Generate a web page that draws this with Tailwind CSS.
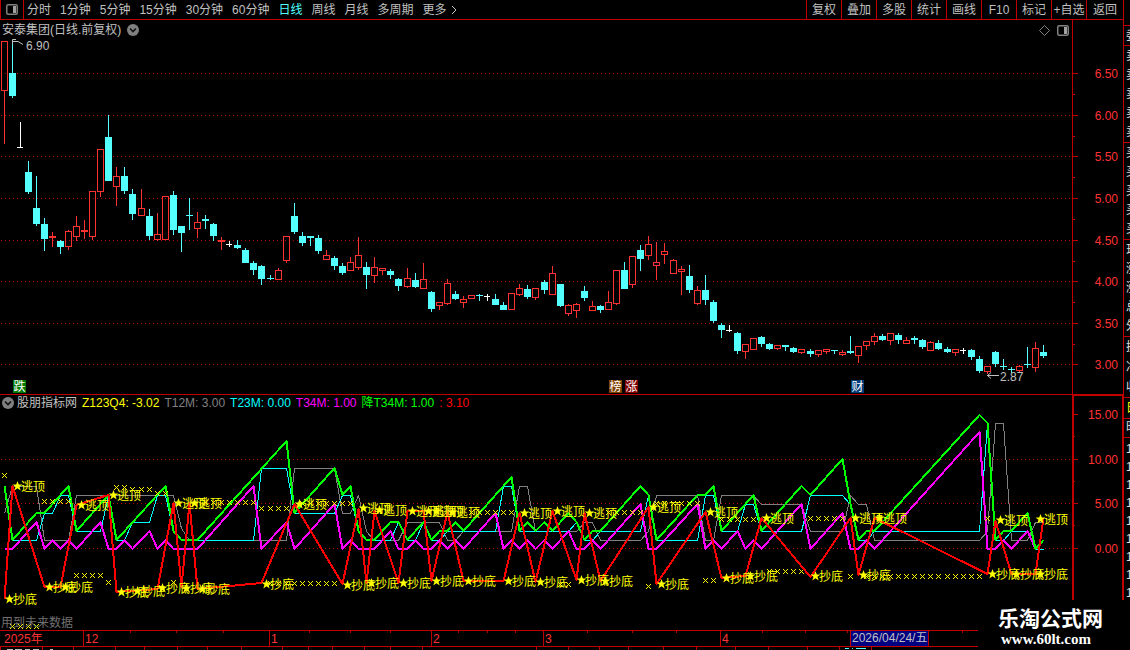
<!DOCTYPE html>
<html lang="zh-CN">
<head>
    <meta charset="UTF-8">
    <meta name="viewport" content="width=device-width, initial-scale=1.0">
    <title>安泰集团 日线</title>
    <script src="https://cdn.jsdelivr.net/npm/@tailwindcss/browser@4"></script>
</head>
<body class="relative flex min-h-screen overflow-hidden bg-black font-['Liberation_Sans','Noto_Sans_CJK_SC',sans-serif] text-[12px] leading-4 text-[#c0c0c0]">

    <main class="flex min-w-0 flex-1 flex-col">

        <!-- Toolbar -->
        <header class="flex h-5 items-stretch justify-between border-b border-[#c00000] whitespace-nowrap">
            <nav class="flex items-center gap-[9px]">
                <button aria-label="侧栏" class="-mr-[6px] flex h-full w-6 items-center justify-center border-x border-[#c00000]">
                    <svg class="h-[11px] w-3" viewBox="0 0 12 11"><rect x=".75" y=".75" width="10.5" height="9.5" rx="1.5" fill="none" stroke="#808080" stroke-width="1.5"/><rect x="7" y="2" width="3" height="7" fill="#a0a0a0"/></svg>
                </button>
                <button>分时</button>
                <button>1分钟</button>
                <button>5分钟</button>
                <button>15分钟</button>
                <button>30分钟</button>
                <button>60分钟</button>
                <button class="text-[#54ffff]">日线</button>
                <button>周线</button>
                <button>月线</button>
                <button>多周期</button>
                <button class="flex items-center gap-1">更多
                    <svg class="h-2 w-[6px]" viewBox="0 0 6 8"><path d="M1 0l4 4-4 4" fill="none" stroke="#c0c0c0"/></svg>
                </button>
            </nav>
            <div class="flex">
                <button class="w-[35px] border-l border-[#c00000]">复权</button>
                <button class="w-[35px] border-l border-[#c00000]">叠加</button>
                <button class="w-[35px] border-l border-[#c00000]">多股</button>
                <button class="w-[35px] border-l border-[#c00000]">统计</button>
                <button class="w-[35px] border-l border-[#c00000]">画线</button>
                <button class="w-[35px] border-l border-[#c00000]">F10</button>
                <button class="w-[35px] border-l border-[#c00000]">标记</button>
                <button class="w-[35px] border-l border-[#c00000]">+自选</button>
                <button class="w-[37px] border-l border-[#c00000]">返回</button>
            </div>
        </header>

        <!-- Price chart -->
        <section>
            <div class="flex h-5">
                <div class="flex flex-1 items-center justify-between pr-[3px] pl-[2px]">
                    <h1 class="flex items-center gap-[6px]">安泰集团(日线.前复权)
                        <svg class="size-3" viewBox="0 0 12 12"><circle cx="6" cy="6" r="6" fill="#808080"/><path d="M3 4.5l3 3 3-3" fill="none" stroke="#101010" stroke-width="1.6"/></svg>
                    </h1>
                    <div class="flex items-center gap-[7px]">
                        <svg class="size-[11px]" viewBox="0 0 11 11"><path d="M5.5 .5l5 5-5 5-5-5z" fill="none" stroke="#808080"/></svg>
                        <svg class="h-[11px] w-3" viewBox="0 0 12 11"><rect x=".75" y=".75" width="10.5" height="9.5" rx="1.5" fill="none" stroke="#808080" stroke-width="1.5"/><rect x="7" y="2" width="3" height="7" fill="#a0a0a0"/></svg>
                    </div>
                </div>
                <div class="w-[51px] border-l border-[#c00000]"></div>
            </div>
            <svg id="price" class="block h-auto w-full overflow-visible" viewBox="0 40 1123 354"></svg>
        </section>

        <!-- Indicator chart -->
        <section>
            <div class="flex h-[17px]">
                <div class="flex flex-1 items-center gap-[5px] border-t border-[#c00000] pl-[2px]">
                    <svg class="-mr-[2px] size-3" viewBox="0 0 12 12"><circle cx="6" cy="6" r="6" fill="#808080"/><path d="M3 4.5l3 3 3-3" fill="none" stroke="#101010" stroke-width="1.6"/></svg>
                    <span>股朋指标网</span>
                    <span class="text-[#ffff00]">Z123Q4: -3.02</span>
                    <span class="text-[#808080]">T12M: 3.00</span>
                    <span class="text-[#00ffff]">T23M: 0.00</span>
                    <span class="text-[#ff00ff]">T34M: 1.00</span>
                    <span class="text-[#00ff00]">降T34M: 1.00</span>
                    <span class="text-[#ff0000]">: 3.10</span>
                </div>
                <div class="w-[51px] border-t-2 border-r border-l-2 border-[#c00000]"></div>
            </div>
            <svg id="indicator" class="block h-auto w-full overflow-visible" viewBox="0 411 1123 239"></svg>
        </section>
    </main>

    <!-- Quote panel, only its left edge is in view -->
    <aside class="flex w-[7px] flex-col overflow-hidden border-l border-[#c00000] pt-[25px] text-[#e0e0e0]">
        <div class="h-5 shrink-0 border-t border-[#c00000] pl-[2px] leading-5">委</div>
        <div class="flex h-[97px] shrink-0 flex-col justify-around border-t border-[#c00000] pl-[2px]"><span>卖</span><span>卖</span><span>卖</span><span>卖</span><span>卖</span></div>
        <div class="flex h-[97px] shrink-0 flex-col justify-around border-t border-[#c00000] pl-[2px]"><span>买</span><span>买</span><span>买</span><span>买</span><span>买</span></div>
        <div class="flex h-[97px] shrink-0 flex-col justify-around border-t border-[#c00000] pl-[2px]"><span>现</span><span>涨</span><span>涨</span><span>总</span><span>外</span></div>
        <div class="flex h-[61px] shrink-0 flex-col justify-around border-t border-[#c00000] pl-[2px]"><span>换</span><span>净</span><span>收</span></div>
        <div class="h-[21px] shrink-0 border-t border-[#c00000] pl-[2px] leading-5 text-[#ffff00]">日</div>
        <div class="h-[19px] shrink-0 border-t border-[#c00000] pl-[2px]">时</div>
        <div class="flex flex-col border-t border-[#c00000] pt-[2px] pl-[2px] leading-[18px]"><span>1</span><span>1</span><span>1</span><span>1</span><span>1</span><span>1</span><span>1</span><span>1</span><span>1</span></div>
    </aside>

    <!-- Watermark -->
    <div class="absolute right-0 bottom-0 h-[50px] w-[152px] bg-black pt-2 pl-5 font-bold text-white">
        <p class="text-[21px] leading-[22px]">乐淘公式网</p>
        <p class="pl-[3px] font-['Liberation_Serif',serif] text-[15px] leading-[18px]">www.60lt.com</p>
    </div>

    <script>
        const NS = 'http://www.w3.org/2000/svg';
        const RED = '#ff3232', CYAN = '#54ffff', FRAME = '#c00000';

        function add(parent, tag, attrs, text) {
            const el = document.createElementNS(NS, tag);
            for (const key in attrs) el.setAttribute(key, attrs[key]);
            if (text !== undefined) el.textContent = text;
            parent.appendChild(el);
            return el;
        }
        const box = (g, x, y, width, height, fill) => add(g, 'rect', { x, y, width, height, fill, 'shape-rendering': 'crispEdges' });
        const label = (g, x, y, text, fill, anchor = 'start') => add(g, 'text', { x, y, fill, 'text-anchor': anchor }, text);
        const barX = i => Math.floor(4.03 + 8.06 * i);

        function dotted(g, y) {
            add(g, 'line', { x1: 1, x2: 1072, y1: y + 0.5, y2: y + 0.5, stroke: '#b00000', 'stroke-dasharray': '1 3', 'shape-rendering': 'crispEdges' });
        }

        // colour, high, body top, body bottom, low
        const candles = `r 41 41 91 144|c 41 73 96 98|w 122 147 148 148|c 161 172 192 194|c 176 208 224 226|c 218 224 239 251|r 232 236 238 247|c 240 241 247 254
r 230 231 247 250|r 216 226 237 241|r 220 230 232 239|r 191 191 237 240|r 149 149 192 197|c 115 137 181 181|r 167 176 187 206|c 167 176 191 194
c 189 194 214 220|r 189 208 216 216|c 209 216 236 240|r 213 234 240 241|r 196 196 240 240|c 191 195 230 235|c 226 226 233 252|c 198 215 216 230
r 212 222 229 238|c 215 219 221 229|c 223 224 236 241|r 237 240 242 250|w 241 244 245 247|c 240 245 248 249|c 248 250 263 263|c 261 263 270 275
c 265 266 279 285|c 275 278 279 280|r 268 270 280 280|r 236 236 261 263|c 203 216 232 234|c 232 236 243 246|c 236 236 238 246|c 235 238 251 254
r 250 255 260 260|c 256 258 266 270|c 263 266 273 275|r 257 262 271 271|r 237 255 268 270|c 262 267 275 289|r 257 267 276 283|r 268 268 271 275
c 269 271 275 279|c 278 279 286 291|r 268 278 287 288|c 273 280 287 288|r 263 279 289 289|c 291 292 309 312|r 302 302 306 310|r 279 283 304 305
c 291 294 299 300|r 296 299 303 308|r 295 295 299 299|c 294 295 296 301|w 294 296 297 301|c 294 299 305 305|c 302 305 310 310|r 293 293 310 310
r 284 288 295 296|c 285 289 297 299|r 288 288 298 300|c 280 282 290 294|r 266 273 295 295|c 284 284 306 307|r 304 305 314 316|r 303 304 311 318
c 286 291 298 301|r 301 306 311 311|c 305 306 310 313|r 291 302 310 310|r 270 270 304 305|c 262 270 289 289|r 256 256 285 288|c 245 250 259 271
r 236 244 256 260|r 242 262 266 280|r 243 251 255 264|r 259 260 274 274|r 266 269 272 295|c 265 276 290 293|r 286 290 304 305|c 275 290 300 305
c 300 302 321 323|c 323 325 330 338|w 325 330 331 332|c 332 333 351 354|r 344 344 352 359|r 338 338 350 350|c 336 337 344 347|c 343 344 349 350
r 345 345 349 350|c 345 345 347 351|c 347 348 352 353|r 349 349 353 354|c 349 351 354 357|r 350 350 355 357|r 349 349 352 354|c 350 350 351 354
r 350 352 355 356|c 336 351 353 354|r 346 346 356 363|r 341 341 346 350|r 333 336 342 345|c 334 336 340 341|r 333 333 341 345|c 333 335 340 344
r 337 340 344 344|c 336 338 340 344|c 339 340 347 349|r 341 342 351 351|c 340 343 349 350|c 347 349 352 353|r 349 349 353 356|w 348 350 351 354
c 349 350 357 360|c 356 359 371 373|r 366 366 372 374|c 351 352 364 367|c 359 366 367 370|c 367 369 370 373|r 365 366 371 372|c 347 364 365 368
r 342 348 368 372|c 345 352 356 358`.split(/[|\n]/);

        const price = document.getElementById('price');
        [[73, '6.50'], [115, '6.00'], [156, '5.50'], [198, '5.00'], [240, '4.50'], [281, '4.00'], [323, '3.50'], [364, '3.00']].forEach(([y, text]) => {
            dotted(price, y);
            box(price, 1073, y, 5, 1, FRAME);
            if (y < 364) box(price, 1073, y + 21, 2, 1, FRAME);
            label(price, 1118, y + 5, text, RED, 'end');
        });
        box(price, 1072, 40, 1, 354, FRAME);

        candles.forEach((row, i) => {
            const [kind, ...nums] = row.split(' ');
            const [high, top, bottom, low] = nums.map(Number);
            const x = barX(i);
            const color = { r: RED, c: CYAN, w: '#ffffff' }[kind];
            if (top > high) box(price, x, high, 1, top - high, color);
            if (low > bottom) box(price, x, bottom, 1, low - bottom, color);
            if (kind === 'r' && bottom - top > 2) {
                add(price, 'rect', { x: x - 2.5, y: top + 0.5, width: 6, height: bottom - top - 1, fill: 'none', stroke: color, 'shape-rendering': 'crispEdges' });
            } else {
                box(price, x - 3, top, kind === 'w' ? 6 : 7, bottom - top, color);
            }
        });

        // High and low of the visible range
        add(price, 'path', { d: 'M12.5 44V39.5H16M12.5 41.5H18L23 44.5', fill: 'none', stroke: '#c0c0c0' });
        label(price, 26, 50, '6.90', '#c0c0c0');
        add(price, 'path', { d: 'M987 375.5H999M991 372.5L987.5 375.5L991 378.5', fill: 'none', stroke: '#c0c0c0' });
        label(price, 1000, 381, '2.87', '#c0c0c0');

        // Event badges
        [[13, '跌', '#007800'], [609, '榜', '#804000'], [625, '涨', '#800000'], [851, '财', '#003c78']].forEach(([x, text, fill]) => {
            box(price, x, 380, 13, 13, fill);
            label(price, x + 6.5, 391, text, '#ffffff', 'middle');
        });

        const ind = document.getElementById('indicator');
        [459, 503, 548].forEach(y => dotted(ind, y));
        [[414, '15.00'], [459, '10.00'], [503, '5.00'], [548, '0.00']].forEach(([y, text]) => {
            box(ind, 1074, y, 4, 1, FRAME);
            if (y < 548) box(ind, 1074, y + 22, 1, 1, FRAME);
            label(ind, 1118, y + 5, text, RED, 'end');
        });
        box(ind, 1072, 411, 2, 189, FRAME);
        box(ind, 1122, 411, 1, 189, FRAME);

        // Pairs of bar index and value
        const series = [
            ['#808080', 1, '0 4 1 7 4 7 5 1 8 1 9 6 21 6 22 2.3 23 1 35 1 36 9 41 9 42 4 43 4 44 6 45 2 46 1 49 1 50 3 54 3 55 1 56 1 57 2 63 2 64 7 65 7 66 2 71 2 72 3 73 3 74 1 79 1 80 2 81 6 86 6 87 1 88 1 89 6 93 6 94 5 99 5 100 2 104 2 105 6 106 5 107 5 108 1 121 1 122 2 123 14 124 14 125 1 127 1 128 3 129 3'],
            ['#00ffff', 1, '0 7 1 1 4 1 5 4 6 4 7 6 8 6 9 2 12 2 13 6 14 1 15 1 16 3 18 3 19 6 20 6 21 2 22 1 31 1 32 9 35 9 36 4 41 4 42 6 43 6 44 2 45 1 48 1 49 3 50 1 51 1 52 3 53 1 54 1 55 2 61 2 62 7 63 7 64 2 70 2 71 3 72 1 73 1 74 2 79 2 80 6 81 1 86 1 87 6 88 6 89 2 91 2 92 5 93 5 94 2 99 2 100 6 104 6 105 5 106 1 107 1 108 2 121 2 122 14 123 1 124 1 125 2 127 2 128 0 129 0'],
            ['#ff00ff', 2, '0 0 1 0 4 3 5 0 6 1 7 0 8 1 9 0 12 3 13 0 14 0 15 1 16 0 18 2 19 0 20 1 21 0 24 0 31 7 32 0 35 3 36 0 41 5 42 0 43 1 44 0 46 0 48 2 49 0 50 0 51 1 52 0 53 0 54 1 55 0 56 1 57 0 61 4 62 0 63 1 64 0 65 1 66 0 67 1 68 0 70 2 71 0 72 0 73 1 74 0 79 5 80 0 81 0 86 5 87 0 88 1 89 0 91 2 92 0 93 1 94 0 99 5 100 0 104 4 105 0 106 0 107 1 108 0 121 13 122 0 123 0 124 1 125 0 127 2 128 0'],
            ['#00ff00', 2, '0 7 1 1 4 4 5 4 8 7 9 2 13 6 14 1 20 7 21 2 22 1 24 1 35 12 36 4 41 9 42 6 43 7 44 2 45 1 46 1 48 3 49 3 50 1 52 3 53 1 54 2 55 2 56 3 57 2 63 8 64 2 65 3 66 2 67 3 68 2 70 4 71 3 72 1 73 2 74 2 79 7 80 6 81 1 86 6 87 6 88 7 89 2 93 6 94 2 99 7 100 6 104 10 105 5 106 1 107 2 108 2 121 15 122 14 123 1 124 2 125 2 127 4 128 0 129 1']
        ];
        const valueY = v => Math.round(548.5 - 8.93 * v);

        function line(color, width, pairs, toY) {
            const nums = pairs.split(' ').map(Number);
            const points = [];
            for (let k = 0; k < nums.length; k += 2) points.push(`${barX(nums[k]) + 0.5},${toY(nums[k + 1]) + (width === 1 ? 0.5 : 0)}`);
            add(ind, 'polyline', { points: points.join(' '), fill: 'none', stroke: color, 'stroke-width': width, 'stroke-linejoin': 'round', 'shape-rendering': 'crispEdges' });
        }
        series.forEach(([color, width, pairs]) => line(color, width, pairs, valueY));

        // Small crosses: first bar, last bar, y
        [[0, 0, 475], [5, 8, 501], [14, 15, 487], [16, 18, 489], [19, 20, 493], [25, 31, 502], [32, 35, 508], [9, 12, 575], [13, 13, 582], [21, 21, 582], [1, 4, 626],
            [37, 43, 503], [33, 41, 583], [58, 63, 512], [75, 79, 512], [81, 86, 503], [89, 93, 519], [69, 70, 584], [80, 80, 586], [87, 88, 580],
            [95, 99, 571], [100, 104, 518], [105, 105, 576], [107, 121, 576], [122, 122, 518]].forEach(([from, to, y]) => {
            for (let i = from; i <= to; i++) {
                const x = barX(i);
                add(ind, 'path', { d: `M${x - 2} ${y - 2}l5 5m0-5l-5 5`, stroke: '#ffff00', 'stroke-width': 1, 'shape-rendering': 'crispEdges' });
            }
        });

        line('#ff0000', 2, '0 599 1 486 5 587 7 587 9 505 13 495 14 592 19 589 21 503 22 587 23 503 24 589 32 583 36 504 42 584 44 509 45 583 46 511 49 583 50 511 52 511 53 581 55 512 57 581 62 581 64 513 66 582 68 511 71 580 72 513 74 581 80 507 81 584 87 512 89 578 92 576 94 518 100 577 105 518 106 575 108 518 122 574 123 521 125 574 128 574 129 518', y => y);

        function signal(i, y, text) {
            const x = barX(i) + 5;
            add(ind, 'path', { d: `M${x + 0.5} ${y - 5}l1.3 3.5h3.7l-3 2.3 1.2 3.7-3.2-2.2-3.2 2.2 1.2-3.7-3-2.3h3.7z`, fill: '#ffff00' });
            label(ind, x + 4, y + 5, text, '#ffff00');
        }
        [[1, 486], [9, 505], [13, 495], [21, 503], [23, 503], [36, 504], [44, 508], [46, 510], [50, 511], [52, 511], [53, 511], [55, 512], [64, 513], [68, 511], [72, 513], [80, 507], [87, 512], [94, 518], [105, 518], [108, 518], [123, 520], [128, 519]]
            .forEach(([i, y]) => signal(i, y, '逃顶'));
        [[0, 599], [5, 587], [7, 587], [14, 592], [16, 591], [19, 588], [22, 588], [24, 589], [32, 584], [42, 585], [45, 583], [49, 583], [53, 581], [57, 581], [62, 581], [66, 582], [71, 580], [74, 581], [81, 584], [89, 578], [92, 576], [100, 576], [106, 575], [122, 574], [125, 574], [128, 574]]
            .forEach(([i, y]) => signal(i, y, '抄底'));

        label(ind, 1, 627, '用到未来数据', '#707070');

        // Time axis
        box(ind, 0, 630, 978, 1, FRAME);
        box(ind, 0, 646, 978, 1, FRAME);
        label(ind, 4, 643, '2025年', RED);
        [[83, '12'], [269, '1'], [431, '2'], [543, '3'], [720, '4']].forEach(([x, text]) => {
            box(ind, x, 631, 1, 15, FRAME);
            label(ind, x + 2, 643, text, RED);
        });
        [130, 176, 223, 309, 350, 390, 458, 487, 515, 587, 632, 676, 762, 805, 847, 962].forEach(x => box(ind, x, 631, 1, 2, FRAME));
        [0, 42, 73, 115, 144, 177, 207, 241, 282, 308, 332, 364, 390, 422, 536, 568, 599, 628, 663, 696, 735, 768, 807, 839, 871].forEach(x => box(ind, x, 647, 1, 3, FRAME));
        box(ind, 850, 631, 79, 15, '#c00000');
        box(ind, 851, 631, 77, 15, '#000080');
        label(ind, 852, 642, '2026/04/24/五', '#c0c0c0');

        // Tops of the tab captions below the axis
        [[7, 6], [15, 7], [25, 5], [33, 6], [50, 3]].forEach(([x, w]) => box(ind, x, 649, w, 1, '#c0c0c0'));
        [[845, 4], [852, 1], [856, 10]].forEach(([x, w]) => box(ind, x, 648, w, 1, CYAN));
    </script>
</body>
</html>
